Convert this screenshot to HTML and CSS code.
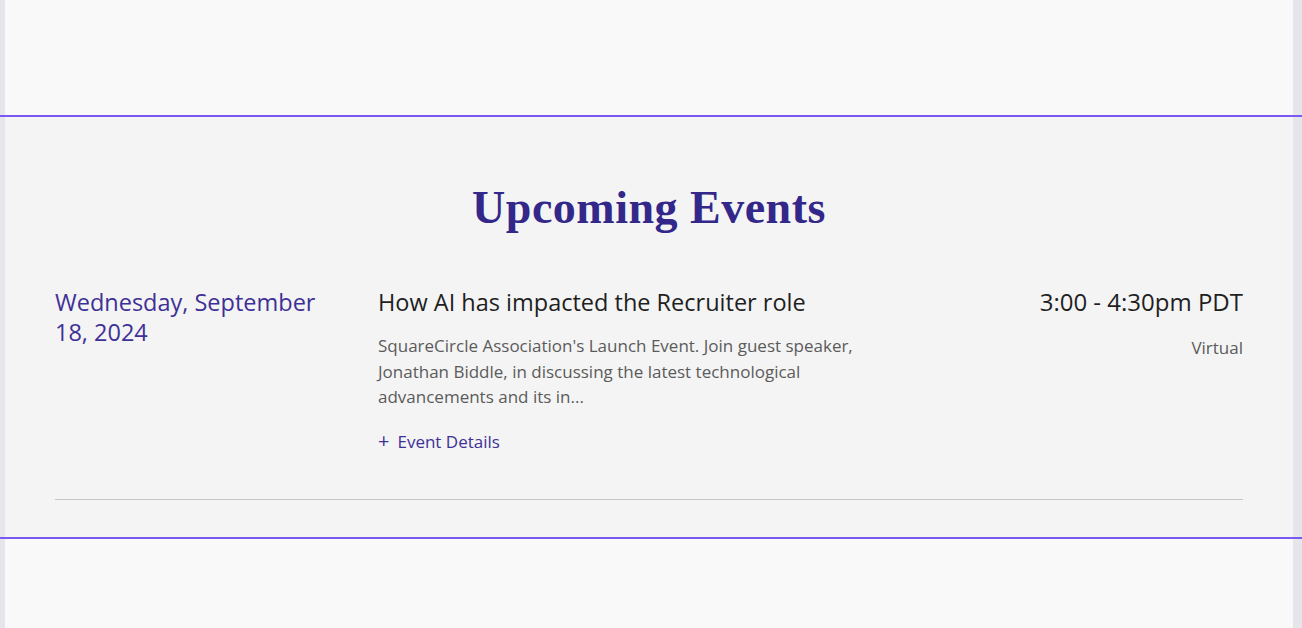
FILE: index.html
```html
<!DOCTYPE html>
<html lang="en">
<head>
<meta charset="utf-8">
<title>Upcoming Events</title>
<link rel="stylesheet" href="styles.css">
</head>
<body>
  <div class="band band-top"><div class="band-inner"></div></div>
  <div class="rule"></div>
  <section class="band">
    <div class="band-inner events">
      <h2 class="events-title">Upcoming Events</h2>
      <div class="event">
        <div class="event-date">Wednesday, September 18, 2024</div>
        <div class="event-body">
          <h3 class="event-name">How AI has impacted the Recruiter role</h3>
          <p class="event-desc">SquareCircle Association's Launch Event. Join guest speaker, Jonathan Biddle, in discussing the latest technological advancements and its in...</p>
          <a class="event-link" href="#"><span class="plus">+</span>Event Details</a>
        </div>
        <div class="event-meta">
          <div class="event-time">3:00 - 4:30pm PDT</div>
          <div class="event-place">Virtual</div>
        </div>
      </div>
      <div class="event-sep"></div>
    </div>
  </section>
  <div class="rule"></div>
  <div class="band band-bottom"><div class="band-inner"></div></div>
</body>
</html>
```

FILE: styles.css
```css
html, body {
  margin: 0;
  padding: 0;
}
body {
  background: #e5e6ec;
  font-family: "Open Sans", "Noto Sans", sans-serif;
  height: 628px;
  overflow: hidden;
}
.band-inner {
  margin: 0 9px 0 5px;
  background: #f4f4f4;
}
.band-top .band-inner {
  height: 115px;
  background: #f9f9f9;
}
.band-bottom .band-inner {
  height: 100px;
  background: #f9f9f9;
}
.rule {
  height: 2px;
  background: #7a58f2;
}
.events {
  padding: 63px 50px 37px;
}
.events-title {
  margin: 0 0 52px;
  text-align: center;
  font-family: "Liberation Serif", "DejaVu Serif", serif;
  font-weight: 700;
  font-size: 46px;
  line-height: 55px;
  letter-spacing: 0.5px;
  color: #33288a;
}
.event {
  display: grid;
  grid-template-columns: 323px 500px 1fr;
  padding-bottom: 45px;
}
.event-date {
  font-size: 23.5px;
  line-height: 30px;
  color: #3e3196;
  padding-right: 40px;
}
.event-name {
  margin: 0;
  font-size: 23.5px;
  line-height: 30px;
  font-weight: 400;
  color: #1f1f1f;
}
.event-desc {
  margin: 16px 0 0;
  font-size: 17px;
  line-height: 25.6px;
  color: #5b5b5b;
}
.event-link {
  display: block;
  height: 25.6px;
  margin-top: 19px;
  font-size: 17px;
  line-height: 25.6px;
  color: #3e3196;
  text-decoration: none;
}
.plus {
  font-size: 20px;
  line-height: 0;
  margin-right: 8px;
}
.event-meta {
  text-align: right;
}
.event-time {
  font-size: 24px;
  line-height: 30px;
  color: #1f1f1f;
}
.event-place {
  margin-top: 18px;
  font-size: 17px;
  line-height: 25.6px;
  color: #5b5b5b;
}
.event-sep {
  height: 1px;
  background: #c4c4c4;
}
```
